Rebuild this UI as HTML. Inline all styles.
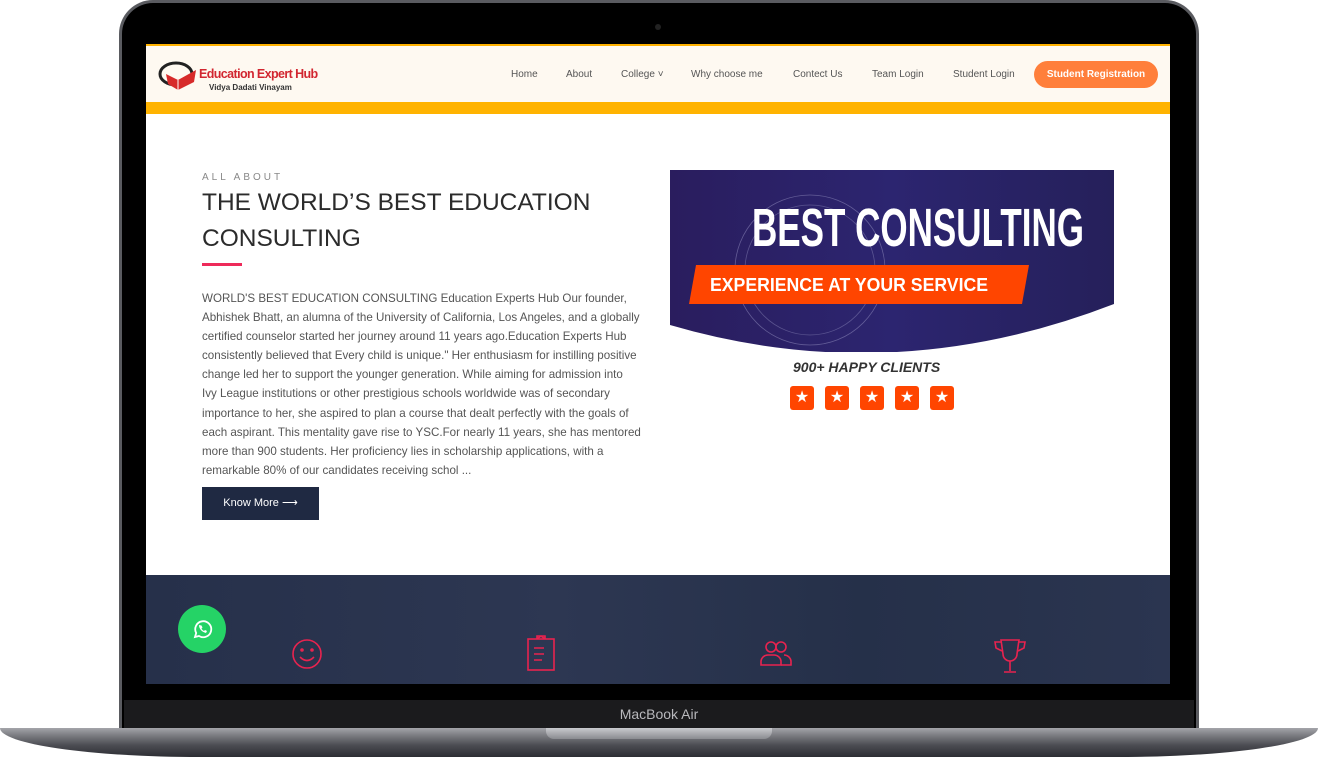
<!DOCTYPE html>
<html><head><meta charset="utf-8"><style>
*{margin:0;padding:0;box-sizing:border-box}
body{width:1318px;height:757px;background:#fff;position:relative;overflow:hidden;font-family:"Liberation Sans",sans-serif}
.bezel{position:absolute;left:119px;top:0;width:1080px;height:730px;background:#000;border-radius:34px 34px 0 0;border:3px solid #5a5b60;border-bottom:none}
.screen{position:absolute;left:146px;top:44px;width:1024px;height:640px;background:#fff;overflow:hidden}
.chin{position:absolute;left:124px;top:700px;width:1070px;height:28px;background:#1b1b1d}
.chin span{position:absolute;left:0;right:0;top:6px;text-align:center;color:#b8b8bc;font-size:14px}
.base{position:absolute;left:0;top:728px;width:1318px;height:29px;background:linear-gradient(#a4a5aa 0,#7c7d82 25%,#4b4c52 60%,#2c2d33 100%);border-radius:0 0 200px 200px/0 0 29px 29px}
.notch{position:absolute;left:546px;top:728px;width:226px;height:11px;background:linear-gradient(#c9cace,#8a8b90);border-radius:0 0 8px 8px}
.header{position:absolute;left:0;top:0;width:1024px;height:58px;background:#fef9f1;border-top:2px solid #ffb200}
.yellow{position:absolute;left:0;top:58px;width:1024px;height:12px;background:#ffb300}
.nav{position:absolute;top:23px;font-size:10px;color:#555}
.btn{position:absolute;left:888px;top:15px;width:124px;height:27px;background:#ff7f3b;border-radius:14px;color:#fff;font-size:10px;font-weight:bold;text-align:center;line-height:27px}
.t{position:absolute;left:56px;color:#2a2a2a}
.body p{font-size:11.6px;line-height:19.1px;color:#555}
.dark{position:absolute;left:0;top:531px;width:1024px;height:109px;background:linear-gradient(90deg,#26304a,#2d3752 40%,#253049 70%,#2b3550)}
</style></head><body>
<div class="bezel"></div>
<div style="position:absolute;left:655px;top:24px;width:6px;height:6px;border-radius:3px;background:#222"></div>
<div class="screen">
 <div class="header">
  <svg style="position:absolute;left:12px;top:14px" width="42" height="34" viewBox="0 0 42 34"><ellipse cx="18" cy="14" rx="16" ry="11" fill="none" stroke="#222" stroke-width="3"/><path d="M8 14 L20 20 L38 10 L36 22 L20 30 L10 24Z" fill="#d72a2a"/><path d="M20 20 L20 30" stroke="#fff" stroke-width="1"/></svg>
  <div style="position:absolute;left:53px;top:21px;font-size:12.5px;font-weight:bold;color:#d22630;letter-spacing:-0.6px">Education Expert Hub</div>
  <div style="position:absolute;left:63px;top:37px;font-size:8px;font-weight:bold;color:#333">Vidya Dadati Vinayam</div>
  <div class="nav" style="left:365px">Home</div>
  <div class="nav" style="left:420px">About</div>
  <div class="nav" style="left:475px">College ˅</div>
  <div class="nav" style="left:545px">Why choose me</div>
  <div class="nav" style="left:647px">Contect Us</div>
  <div class="nav" style="left:726px">Team Login</div>
  <div class="nav" style="left:807px">Student Login</div>
  <div class="btn">Student Registration</div>
 </div>
 <div class="yellow"></div>
 <div class="t" style="top:128px;font-size:10px;letter-spacing:3px;color:#888">ALL ABOUT</div>
 <div class="t" style="top:141px;font-size:24.5px;line-height:36px;width:440px;color:#2b2b2b">THE WORLD’S BEST EDUCATION CONSULTING</div>
 <div style="position:absolute;left:56px;top:219px;width:40px;height:3px;background:#ee2a5a"></div>
 <div class="t body" style="top:245px;width:470px"><p>WORLD'S BEST EDUCATION CONSULTING Education Experts Hub Our founder,<br>Abhishek Bhatt, an alumna of the University of California, Los Angeles, and a globally<br>certified counselor started her journey around 11 years ago.Education Experts Hub<br>consistently believed that Every child is unique." Her enthusiasm for instilling positive<br>change led her to support the younger generation. While aiming for admission into<br>Ivy League institutions or other prestigious schools worldwide was of secondary<br>importance to her, she aspired to plan a course that dealt perfectly with the goals of<br>each aspirant. This mentality gave rise to YSC.For nearly 11 years, she has mentored<br>more than 900 students. Her proficiency lies in scholarship applications, with a<br>remarkable 80% of our candidates receiving schol ...</p></div>
 <div style="position:absolute;left:56px;top:443px;width:117px;height:33px;background:#1f2942;color:#fff;font-size:11px;line-height:33px;text-align:center">Know More ⟶</div>
 <svg style="position:absolute;left:524px;top:126px" width="444" height="182" viewBox="0 0 444 182">
  <defs><linearGradient id="g" x1="0" x2="1"><stop offset="0" stop-color="#2a1d5e"/><stop offset="0.5" stop-color="#2c2570"/><stop offset="1" stop-color="#25205a"/></linearGradient></defs>
  <path d="M0 0H444V134Q222 220 0 155Z" fill="url(#g)"/>
  <circle cx="140" cy="100" r="75" fill="none" stroke="#8a86b8" stroke-width="0.8" opacity="0.6"/>
  <circle cx="140" cy="100" r="65" fill="none" stroke="#8a86b8" stroke-width="0.8" opacity="0.5"/>
  <text x="414" y="76" text-anchor="end" font-family="Liberation Sans Narrow,Liberation Sans,sans-serif" font-weight="bold" font-size="54" fill="#fff" textLength="332" lengthAdjust="spacingAndGlyphs">BEST CONSULTING</text>
  <path d="M26 95H359L352 134H19Z" fill="#ff4500"/>
  <text x="40" y="121" font-family="Liberation Sans,sans-serif" font-weight="bold" font-size="18" fill="#fff" textLength="278" lengthAdjust="spacingAndGlyphs">EXPERIENCE AT YOUR SERVICE</text>
 </svg>
 <div style="position:absolute;left:647px;top:315px;font-size:14px;font-weight:bold;font-style:italic;color:#333">900+ HAPPY CLIENTS</div>
 <div style="position:absolute;left:644px;top:342px;display:flex;gap:11px">
  <div style="width:24px;height:24px;background:#ff4500;border-radius:3px;color:#fff;font-size:16px;text-align:center;line-height:24px">★</div>
  <div style="width:24px;height:24px;background:#ff4500;border-radius:3px;color:#fff;font-size:16px;text-align:center;line-height:24px">★</div>
  <div style="width:24px;height:24px;background:#ff4500;border-radius:3px;color:#fff;font-size:16px;text-align:center;line-height:24px">★</div>
  <div style="width:24px;height:24px;background:#ff4500;border-radius:3px;color:#fff;font-size:16px;text-align:center;line-height:24px">★</div>
  <div style="width:24px;height:24px;background:#ff4500;border-radius:3px;color:#fff;font-size:16px;text-align:center;line-height:24px">★</div>
 </div>
 <div class="dark">
  <div style="position:absolute;left:32px;top:30px;width:48px;height:48px;border-radius:24px;background:#25d366"></div>
  <svg style="position:absolute;left:45px;top:43px" width="22" height="22" viewBox="0 0 22 22"><path d="M4 19l1.2-4A8 8 0 1 1 8 18Z" fill="none" stroke="#fff" stroke-width="1.8"/><path d="M8 7c0 4 3 7 7 8l1-2-2-1-1 1c-1-.5-2-1.5-2.5-2.5l1-1-1-2Z" fill="#fff"/></svg>
  <svg style="position:absolute;left:145px;top:63px" width="32" height="32" viewBox="0 0 32 32" fill="none" stroke="#e8234f" stroke-width="1.6"><circle cx="16" cy="16" r="14"/><circle cx="11" cy="12" r="1" fill="#e8234f"/><circle cx="21" cy="12" r="1" fill="#e8234f"/><path d="M9 19q7 7 14 0"/></svg>
  <svg style="position:absolute;left:380px;top:59px" width="30" height="38" viewBox="0 0 30 38" fill="none" stroke="#e8234f" stroke-width="1.6"><rect x="2" y="5" width="26" height="31"/><path d="M11 5V2h8v3M11 5l4-3 4 3"/><path d="M8 14h10M8 20h10M8 26h8"/></svg>
  <svg style="position:absolute;left:612px;top:64px" width="36" height="30" viewBox="0 0 36 30" fill="none" stroke="#e8234f" stroke-width="1.6"><circle cx="13" cy="8" r="5"/><path d="M3 26v-4a7 7 0 0 1 7-6h6a7 7 0 0 1 7 6v4Z"/><circle cx="23" cy="8" r="5"/><path d="M23 26h10v-4a7 7 0 0 0-7-6"/></svg>
  <svg style="position:absolute;left:847px;top:63px" width="34" height="36" viewBox="0 0 34 36" fill="none" stroke="#e8234f" stroke-width="1.6"><path d="M8 2h18l-2 14a7 7 0 0 1-14 0Z"/><path d="M8 4H2l1 6 6 3M26 4h6l-1 6-6 3M17 23v10M11 34h12"/></svg>
 </div>
</div>
<div style="position:absolute;left:146px;top:684px;width:1024px;height:16px;background:#000"></div>
<div class="chin"><span>MacBook Air</span></div>
<div class="base"></div>
<div class="notch"></div>
</body></html>
